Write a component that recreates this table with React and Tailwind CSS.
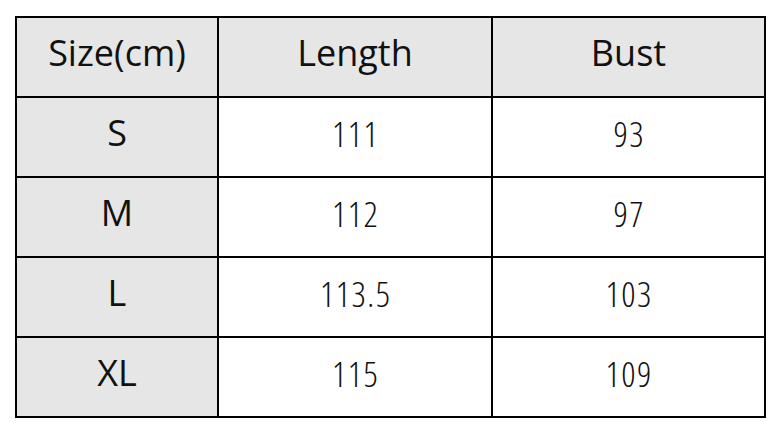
const rows = [
  ['S', '111', '93'],
  ['M', '112', '97'],
  ['L', '113.5', '103'],
  ['XL', '115', '109'],
];

function Cell({ children, gray }) {
  return (
    <div className={`flex items-center justify-center pb-2 ${gray ? 'bg-[#e6e6e6]' : 'bg-white'}`}>
      {children}
    </div>
  );
}

export default function App() {
  return (
    <div className="w-[782px] h-[433px] bg-white pl-[15px] pt-[16px] text-[#111] text-[36px] leading-none font-['Open_Sans',sans-serif]">
      <div className="w-[751px] h-[402px] bg-black p-[2px] grid grid-cols-[200px_272px_271px] grid-rows-[repeat(5,78px)] gap-[2px]">
        <Cell gray>Size(cm)</Cell>
        <Cell gray>Length</Cell>
        <Cell gray>Bust</Cell>
        {rows.map((r) => (
          <>
            <Cell gray key={r[0]}>{r[0]}</Cell>
            <Cell><span className="text-[35px] font-light [font-stretch:75%] tracking-[1.5px] pl-[1.5px]">{r[1]}</span></Cell>
            <Cell><span className="text-[35px] font-light [font-stretch:75%] tracking-[1.5px] pl-[1.5px]">{r[2]}</span></Cell>
          </>
        ))}
      </div>
    </div>
  );
}
